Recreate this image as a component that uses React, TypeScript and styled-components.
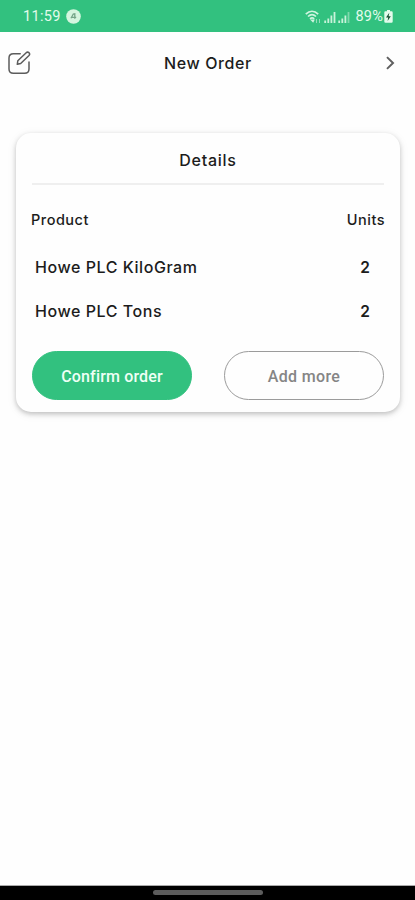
import React from 'react';
import styled, { createGlobalStyle } from 'styled-components';

const GlobalStyle = createGlobalStyle`
  * { box-sizing: border-box; }
  body { margin: 0; background: #fefefe; }
`;

const Screen = styled.div`
  display: flex;
  flex-direction: column;
  height: 900px;
  background: #fefefe;
  color: #1c1c1c;
  font-family: Inter, sans-serif;
  overflow: hidden;
`;

const StatusBar = styled.header`
  display: flex;
  align-items: center;
  justify-content: space-between;
  height: 32px;
  padding: 1px 22px 0 23px;
  background: #32c17f;
  color: #e3fbec;
  font: 400 14.5px/18px Roboto, sans-serif;
`;

const StatusGroup = styled.div<{ $gap: number }>`
  display: flex;
  align-items: center;
  gap: ${(p) => p.$gap}px;
`;

const Clock = styled.span`
  letter-spacing: 0.3px;
`;

const Battery = styled.span`
  display: flex;
  align-items: center;
  letter-spacing: 0.2px;
  gap: 1px;
  margin-left: 3px;
`;

const TopBar = styled.nav`
  display: grid;
  grid-template-columns: 24px 1fr 24px;
  align-items: center;
  height: 62px;
  padding: 0 13px 0 8px;
`;

const Title = styled.h1`
  margin: 0 0 0 6px;
  text-align: center;
  font-size: 16px;
  font-weight: 500;
  line-height: 24px;
  letter-spacing: 0.6px;
`;

const IconButton = styled.button`
  display: flex;
  padding: 0;
  border: 0;
  background: none;
`;

const Card = styled.main`
  margin: 39px 15px 0 16px;
  height: 279px;
  padding: 0 16px;
  border-radius: 15px;
  background: #fefefe;
  box-shadow: 0 2px 5px rgba(0, 0, 0, 0.22), 0 2px 12px rgba(0, 0, 0, 0.06);
`;

const CardTitle = styled.h2`
  margin: 0;
  height: 52px;
  padding-top: 3px;
  border-bottom: 2px solid #efefef;
  text-align: center;
  font-size: 16px;
  font-weight: 500;
  line-height: 49px;
  letter-spacing: 0.75px;
`;

const ColumnHeads = styled.div`
  display: flex;
  justify-content: space-between;
  margin: 25px -1px 0;
  font-size: 14.5px;
  font-weight: 500;
  line-height: 20px;
  letter-spacing: 0.5px;
`;

const ItemRow = styled.div`
  display: flex;
  align-items: center;
  justify-content: space-between;
  height: 44px;
  padding: 0 14px 0 3px;
`;

const Items = styled.div`
  margin-top: 15px;
`;

const ItemName = styled.span`
  font-size: 16px;
  font-weight: 500;
  letter-spacing: 0.55px;
`;

const Quantity = styled.span`
  font-size: 15.5px;
  font-weight: 600;
`;

const Actions = styled.div`
  display: flex;
  justify-content: space-between;
  margin-top: 18px;
`;

const Action = styled.button<{ $primary?: boolean }>`
  width: 160px;
  height: 49px;
  padding: 2px 0 0;
  border-radius: 25px;
  border: 1px solid ${(p) => (p.$primary ? '#32c17f' : '#9b9b9b')};
  background: ${(p) => (p.$primary ? '#32c17f' : '#fefefe')};
  color: ${(p) => (p.$primary ? '#eefff5' : '#858585')};
  font: 500 16px/20px Roboto, sans-serif;
  letter-spacing: ${(p) => (p.$primary ? '0.15px' : '0.35px')};
`;

const NavigationBar = styled.footer`
  display: flex;
  justify-content: center;
  margin-top: auto;
  height: 15px;
  padding-top: 4px;
  border-top: 1px solid #aaa;
  background: #000;
`;

const HomeHandle = styled.div`
  width: 110px;
  height: 5px;
  border-radius: 2.5px;
  background: #5c5c5c;
`;

const NoticeIcon = () => (
  <svg width="15" height="15" viewBox="0 0 15 15">
    <circle cx="7.5" cy="7.5" r="7.3" fill="#d5f5df" />
    <path d="M5 9.3 7.3 5l1.5-.3v5M5.2 8.4h5" fill="none" stroke="#75a588" strokeWidth="1.3" />
  </svg>
);

const WifiIcon = () => (
  <svg width="17" height="14" viewBox="0 0 17 14" fill="none" stroke="#cff4df" strokeWidth="1.7">
    <path d="M.8 4.2c3.8-3.7 8.6-3.7 12.4 0M3 6.5c2.6-2.4 5.4-2.4 8 0M5 8.8c1.4-1.3 2.8-1.3 4.2 0" />
    <path d="m5 9.5 3.2 3.3L9.8 9.5z" fill="#cff4df" stroke="none" />
    <path d="M11.5 9v4M14.5 9v4" strokeWidth="1" opacity=".6" />
  </svg>
);

const SignalIcon = ({ faint = false }: { faint?: boolean }) => (
  <svg width="12" height="14" viewBox="0 0 12 14" stroke="#c9f2da" strokeWidth="1.8">
    <path d="M1.2 13v-2.5M4.3 13V8.5M7.4 13V5.5" />
    <path d="M10.5 13V2" opacity={faint ? 0.5 : 1} />
  </svg>
);

const BatteryIcon = () => (
  <svg width="9" height="13" viewBox="0 0 9 13">
    <path d="M3 0h3v1.3h1.5q1.2 0 1.2 1.2v9q0 1.2-1.2 1.2h-6Q.3 12.7.3 11.5v-9q0-1.2 1.2-1.2H3z" fill="#e3fbec" />
    <path d="M5.3 2.8 2 7.4h2.2l-.6 3.5 3.2-4.7H4.6z" fill="#174f32" />
  </svg>
);

const EditIcon = () => (
  <svg width="24" height="24" viewBox="0 0 24 24" fill="none" stroke="#5c5c5c" strokeWidth="1.5" strokeLinecap="round" strokeLinejoin="round">
    <path d="M12.2 2.7H5.4Q1 2.7 1 7v11q0 4.3 4.4 4.3h11.2q4.4 0 4.4-4.3v-7" />
    <path d="m9.8 9.8 8.4-8.1q1.3-1.2 2.8 0 1.3 1.4 0 2.8l-8.3 8-3.4.8z" />
  </svg>
);

const NextIcon = () => (
  <svg width="24" height="24" viewBox="0 0 24 24" fill="none" stroke="#606060" strokeWidth="2">
    <path d="m9 6.1 6 5.9-6 5.9" />
  </svg>
);

const products = [
  { name: 'Howe PLC KiloGram', units: 2 },
  { name: 'Howe PLC Tons', units: 2 },
];

export default function App() {
  return (
    <Screen>
      <GlobalStyle />
      <StatusBar>
        <StatusGroup $gap={5}>
          <Clock>11:59</Clock>
          <NoticeIcon />
        </StatusGroup>
        <StatusGroup $gap={2}>
          <WifiIcon />
          <SignalIcon />
          <SignalIcon faint />
          <Battery>
            <span>89%</span>
            <BatteryIcon />
          </Battery>
        </StatusGroup>
      </StatusBar>
      <TopBar>
        <IconButton aria-label="Edit"><EditIcon /></IconButton>
        <Title>New Order</Title>
        <IconButton aria-label="Next"><NextIcon /></IconButton>
      </TopBar>
      <Card>
        <CardTitle>Details</CardTitle>
        <ColumnHeads>
          <span>Product</span>
          <span>Units</span>
        </ColumnHeads>
        <Items>
          {products.map((product) => (
            <ItemRow key={product.name}>
              <ItemName>{product.name}</ItemName>
              <Quantity>{product.units}</Quantity>
            </ItemRow>
          ))}
        </Items>
        <Actions>
          <Action $primary>Confirm order</Action>
          <Action>Add more</Action>
        </Actions>
      </Card>
      <NavigationBar>
        <HomeHandle />
      </NavigationBar>
    </Screen>
  );
}
